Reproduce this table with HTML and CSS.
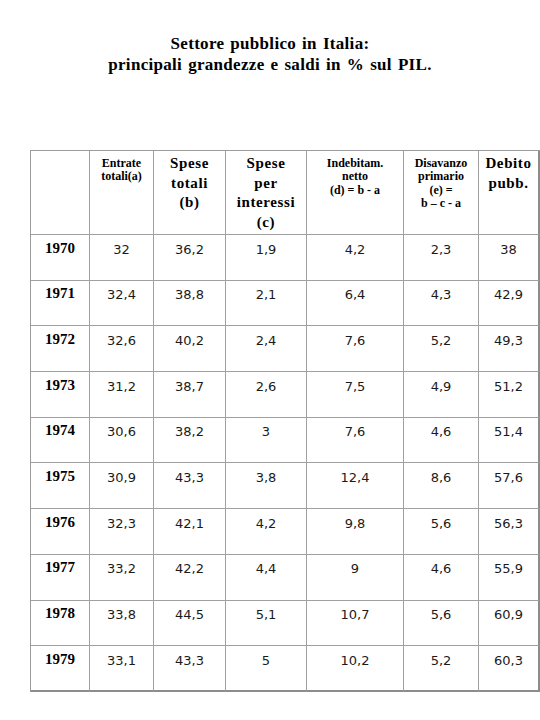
FILE: index.html
```html
<!DOCTYPE html>
<html lang="it">
<head>
<meta charset="utf-8">
<title>Settore pubblico in Italia</title>
<link rel="stylesheet" href="styles.css">
</head>
<body>
<h1 class="title">Settore pubblico in Italia:<br>principali grandezze e saldi in % sul PIL.</h1>

<div class="table" role="table">
  <div class="cell head" role="columnheader"></div>
  <div class="cell head small" role="columnheader">Entrate<br>totali(a)</div>
  <div class="cell head big" role="columnheader">Spese<br>totali<br>(b)</div>
  <div class="cell head big" role="columnheader">Spese<br>per<br>interessi<br>(c)</div>
  <div class="cell head small" role="columnheader">Indebitam.<br>netto<br>(d) = b - a</div>
  <div class="cell head small" role="columnheader">Disavanzo<br>primario<br>(e) =<br>b – c - a</div>
  <div class="cell head big last" role="columnheader">Debito<br>pubb.</div>

  <div class="cell year">1970</div><div class="cell num">32</div><div class="cell num">36,2</div><div class="cell num">1,9</div><div class="cell num">4,2</div><div class="cell num">2,3</div><div class="cell num last">38</div>
  <div class="cell year">1971</div><div class="cell num">32,4</div><div class="cell num">38,8</div><div class="cell num">2,1</div><div class="cell num">6,4</div><div class="cell num">4,3</div><div class="cell num last">42,9</div>
  <div class="cell year">1972</div><div class="cell num">32,6</div><div class="cell num">40,2</div><div class="cell num">2,4</div><div class="cell num">7,6</div><div class="cell num">5,2</div><div class="cell num last">49,3</div>
  <div class="cell year">1973</div><div class="cell num">31,2</div><div class="cell num">38,7</div><div class="cell num">2,6</div><div class="cell num">7,5</div><div class="cell num">4,9</div><div class="cell num last">51,2</div>
  <div class="cell year">1974</div><div class="cell num">30,6</div><div class="cell num">38,2</div><div class="cell num">3</div><div class="cell num">7,6</div><div class="cell num">4,6</div><div class="cell num last">51,4</div>
  <div class="cell year">1975</div><div class="cell num">30,9</div><div class="cell num">43,3</div><div class="cell num">3,8</div><div class="cell num">12,4</div><div class="cell num">8,6</div><div class="cell num last">57,6</div>
  <div class="cell year">1976</div><div class="cell num">32,3</div><div class="cell num">42,1</div><div class="cell num">4,2</div><div class="cell num">9,8</div><div class="cell num">5,6</div><div class="cell num last">56,3</div>
  <div class="cell year">1977</div><div class="cell num">33,2</div><div class="cell num">42,2</div><div class="cell num">4,4</div><div class="cell num">9</div><div class="cell num">4,6</div><div class="cell num last">55,9</div>
  <div class="cell year">1978</div><div class="cell num">33,8</div><div class="cell num">44,5</div><div class="cell num">5,1</div><div class="cell num">10,7</div><div class="cell num">5,6</div><div class="cell num last">60,9</div>
  <div class="cell year bottom">1979</div><div class="cell num bottom">33,1</div><div class="cell num bottom">43,3</div><div class="cell num bottom">5</div><div class="cell num bottom">10,2</div><div class="cell num bottom">5,2</div><div class="cell num bottom last">60,3</div>
</div>
</body>
</html>
```
FILE: styles.css
```css
* { box-sizing: border-box; }

body {
  margin: 0;
  background: #ffffff;
  color: #000000;
  font-family: "Liberation Serif", "Times New Roman", serif;
}

.title {
  margin: 33px 0 0;
  font-size: 17px;
  line-height: 21px;
  font-weight: bold;
  text-align: center;
  letter-spacing: 0.3px;
  word-spacing: 1.5px;
}

.table {
  display: grid;
  width: fit-content;
  margin: 75px 0 0 30px;
  grid-template-columns: 59px 64px 72px 81px 97px 75px 61px;
  grid-template-rows: 84px repeat(10, 45.7px);
  border-left: 1px solid #9c9c9c;
  border-top: 1px solid #9c9c9c;
}

.cell {
  border-right: 1px solid #a0a0a0;
  border-bottom: 1px solid #a0a0a0;
  text-align: center;
}

.cell.last { border-right: 2px solid #8c8c8c; }
.cell.bottom { border-bottom: 2px solid #8c8c8c; }

.head {
  font-weight: bold;
}

.head.small {
  font-size: 12px;
  line-height: 13.5px;
  padding-top: 5.5px;
}

.head.big {
  font-size: 15px;
  line-height: 19.7px;
  letter-spacing: 0.6px;
  padding-top: 3px;
}

.year {
  font-size: 15px;
  line-height: 17px;
  font-weight: bold;
  padding-top: 4.6px;
}

.num {
  font-family: "DejaVu Sans", Verdana, sans-serif;
  font-size: 13px;
  line-height: 15px;
  color: #1a1a1a;
  padding-top: 6.5px;
}
```
